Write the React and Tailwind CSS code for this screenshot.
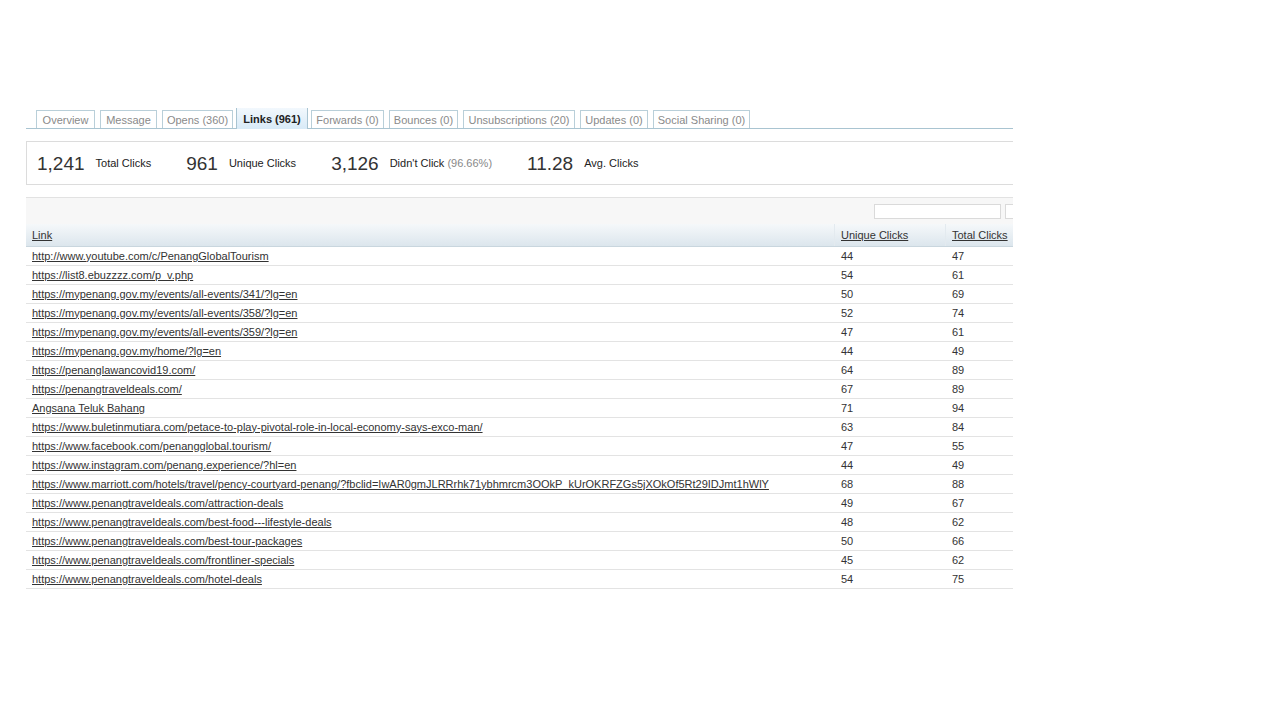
import React from "react";

const tabs = [
  { label: "Overview", w: "w-[59px]" },
  { label: "Message", w: "w-[57px]" },
  { label: "Opens (360)", w: "w-[71px]" },
  { label: "Links (961)", w: "w-[72px]", active: true },
  { label: "Forwards (0)", w: "w-[73px]" },
  { label: "Bounces (0)", w: "w-[69px]" },
  { label: "Unsubscriptions (20)", w: "w-[112px]" },
  { label: "Updates (0)", w: "w-[68px]" },
  { label: "Social Sharing (0)", w: "w-[97px]" },
];

const links = [
  ["http://www.youtube.com/c/PenangGlobalTourism", 44, 47],
  ["https://list8.ebuzzzz.com/p_v.php", 54, 61],
  ["https://mypenang.gov.my/events/all-events/341/?lg=en", 50, 69],
  ["https://mypenang.gov.my/events/all-events/358/?lg=en", 52, 74],
  ["https://mypenang.gov.my/events/all-events/359/?lg=en", 47, 61],
  ["https://mypenang.gov.my/home/?lg=en", 44, 49],
  ["https://penanglawancovid19.com/", 64, 89],
  ["https://penangtraveldeals.com/", 67, 89],
  ["Angsana Teluk Bahang", 71, 94],
  ["https://www.buletinmutiara.com/petace-to-play-pivotal-role-in-local-economy-says-exco-man/", 63, 84],
  ["https://www.facebook.com/penangglobal.tourism/", 47, 55],
  ["https://www.instagram.com/penang.experience/?hl=en", 44, 49],
  ["https://www.marriott.com/hotels/travel/pency-courtyard-penang/?fbclid=IwAR0gmJLRRrhk71ybhmrcm3OOkP_kUrOKRFZGs5jXOkOf5Rt29IDJmt1hWlY", 68, 88],
  ["https://www.penangtraveldeals.com/attraction-deals", 49, 67],
  ["https://www.penangtraveldeals.com/best-food---lifestyle-deals", 48, 62],
  ["https://www.penangtraveldeals.com/best-tour-packages", 50, 66],
  ["https://www.penangtraveldeals.com/frontliner-specials", 45, 62],
  ["https://www.penangtraveldeals.com/hotel-deals", 54, 75],
];

const stats = [
  { value: "1,241", label: "Total Clicks" },
  { value: "961", label: "Unique Clicks" },
  { value: "3,126", label: "Didn't Click", extra: "(96.66%)" },
  { value: "11.28", label: "Avg. Clicks" },
];

const App = () => {
  return (
    <div className="min-h-[720px] bg-white font-['Liberation_Sans',Arial,sans-serif] text-[11px] text-[#333]">
      <div className="pt-[108px] pl-[26px]">
        <div className="w-[987px] overflow-hidden">
          {/* Tabs */}
          <div className="flex items-end gap-[5px] pl-[10px] border-b border-[#a9c4d1] h-[21px]">
            {tabs.map((t) =>
              t.active ? (
                <div
                  key={t.label}
                  className={`${t.w} -mx-[2px] -mb-px h-[22px] pt-[1px] flex items-center justify-center whitespace-nowrap border border-b-0 border-[#a9c4d1] bg-gradient-to-b from-[#f2f8fd] to-[#d8eaf7] font-bold text-[#222] leading-none`}
                >
                  {t.label}
                </div>
              ) : (
                <div
                  key={t.label}
                  className={`${t.w} h-[18px] pt-[1px] flex items-center justify-center whitespace-nowrap border border-b-0 border-[#b9cfd9] text-[#8a8a8a] leading-none`}
                >
                  {t.label}
                </div>
              )
            )}
          </div>

          {/* Stats */}
          <div className="mt-[12px] w-[1040px] h-[44px] border border-[#dcdcdc] flex items-center pl-[10px]">
            {stats.map((s) => (
              <div key={s.label} className="flex items-center mr-[35px]">
                <span className="text-[19px] text-[#333] leading-none">{s.value}</span>
                <span className="ml-[11px] text-[#222]">
                  {s.label}
                  {s.extra && <span className="text-[#888]"> {s.extra}</span>}
                </span>
              </div>
            ))}
          </div>

          {/* Table */}
          <div className="mt-[12px] w-[1060px]">
            <div className="h-[27px] border-t border-[#e2e2e2] bg-[#f7f7f7] flex items-center pl-[848px] gap-[4px]">
              <div className="w-[127px] h-[15px] border border-[#dadada] bg-white" />
              <div className="w-[60px] h-[15px] border border-[#dadada] bg-white" />
            </div>
            <div className="flex h-[23px] bg-gradient-to-b from-[#f5f8fa] to-[#dce6ed] border-b border-[#c9d6de]">
              <div className="w-[809px] pl-[6px] flex items-center border-r border-[#e3eaef]">
                <span className="underline">Link</span>
              </div>
              <div className="w-[111px] pl-[6px] flex items-center border-r border-[#e3eaef]">
                <span className="underline">Unique Clicks</span>
              </div>
              <div className="flex-1 pl-[6px] flex items-center">
                <span className="underline">Total Clicks</span>
              </div>
            </div>
            {links.map(([url, u, t]) => (
              <div key={url} className="flex h-[19px] border-b border-[#e3e3e3] items-center">
                <div className="w-[809px] pl-[6px] whitespace-nowrap">
                  <span className="underline text-[#333]">{url}</span>
                </div>
                <div className="w-[111px] pl-[6px]">{u}</div>
                <div className="flex-1 pl-[6px]">{t}</div>
              </div>
            ))}
          </div>
        </div>
      </div>
    </div>
  );
};

export default App;
